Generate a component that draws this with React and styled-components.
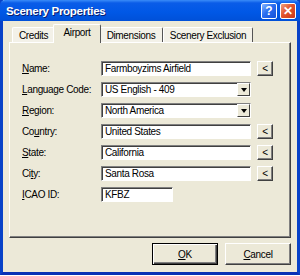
import React from "react";
import styled, { createGlobalStyle } from "styled-components";

const Global = createGlobalStyle`
  html, body {
    margin: 0;
    padding: 0;
    background: #ffffff;
  }
  * { box-sizing: border-box; }
`;

const font = `"Liberation Sans", Arial, sans-serif`;

const Window = styled.div`
  width: 300px;
  height: 275px;
  background: #ece9d8;
  border-left: 3px solid #0842c8;
  border-right: 3px solid #0842c8;
  border-bottom: 3px solid #0831b5;
  display: flex;
  flex-direction: column;
  font-family: ${font};
  font-size: 10px;
  letter-spacing: -0.35px;
  color: #000;
`;

const TitleBar = styled.div`
  height: 21px;
  margin: 0 -3px;
  padding: 0 4px 0 6px;
  border-radius: 5px 5px 0 0;
  display: flex;
  align-items: center;
  justify-content: space-between;
  background: linear-gradient(#3a8cf8 0, #0a5ce8 3px, #0058e6 12px, #0050d8 21px);
`;

const Title = styled.span`
  color: #fff;
  font-weight: bold;
  font-size: 11.5px;
  letter-spacing: -0.3px;
  text-shadow: 1px 1px 0 #0a1e6e;
`;

const Controls = styled.div`
  display: flex;
  gap: 3px;
`;

const CapButton = styled.div`
  width: 16px;
  height: 16px;
  border: 1px solid #fff;
  border-radius: 2px;
  display: flex;
  align-items: center;
  justify-content: center;
  color: #fff;
  font-family: "Liberation Sans", sans-serif;
  font-weight: bold;
  font-size: 12px;
  letter-spacing: 0;
  background: ${(p) =>
    p.$close
      ? "linear-gradient(135deg, #f0a080 0%, #e2542c 45%, #c8381a 100%)"
      : "linear-gradient(135deg, #8ab8ff 0%, #2a6ef0 45%, #1450d8 100%)"};
`;

const Body = styled.div`
  flex: 1;
  padding: 3px 6px 0 6px;
  display: flex;
  flex-direction: column;
`;

const TabStrip = styled.div`
  height: 18px;
  padding-left: 3px;
  display: flex;
  align-items: flex-end;
  position: relative;
  z-index: 1;
`;

const Tab = styled.div`
  width: ${(p) => p.$w}px;
  height: ${(p) => (p.$active ? 19 : 15)}px;
  margin: ${(p) => (p.$active ? "0 -2px -1px -2px" : "0")};
  background: ${(p) => (p.$active ? "#ece9d8" : "#f3f1e8")};
  border-top: 1px solid #fff;
  border-left: 1px solid #fff;
  border-right: 1px solid #555;
  border-radius: 2px 2px 0 0;
  display: flex;
  align-items: ${(p) => (p.$active ? "flex-start" : "center")};
  padding-top: ${(p) => (p.$active ? "2px" : "0")};
  justify-content: center;
  white-space: nowrap;
  position: relative;
  z-index: ${(p) => (p.$active ? 2 : 1)};
`;

const Panel = styled.div`
  height: 196px;
  border-top: 1px solid #fff;
  border-left: 1px solid #fff;
  border-right: 1px solid #404040;
  border-bottom: 1px solid #404040;
  box-shadow: inset -1px -1px 0 #808080;
  padding: 18px 0 0 12px;
`;

const Form = styled.div`
  display: grid;
  grid-template-columns: 73px 150px 16px;
  grid-auto-rows: 15px;
  column-gap: 6px;
  row-gap: 6px;
`;

const Label = styled.label`
  display: flex;
  align-items: center;
  white-space: nowrap;
`;

const Field = styled.div`
  grid-column: 2;
  width: ${(p) => p.$w || 150}px;
  height: 15px;
  background: #fff;
  border-top: 1px solid #808080;
  border-left: 1px solid #808080;
  border-right: 1px solid #fff;
  border-bottom: 1px solid #fff;
  box-shadow: inset 1px 1px 0 #404040;
  display: flex;
  align-items: center;
  padding-left: 3px;
  white-space: nowrap;
  overflow: hidden;
`;

const FieldText = styled.span`
  flex: 1;
`;

const DropArrow = styled.div`
  width: 13px;
  height: 13px;
  background: #ece9d8;
  border-top: 1px solid #fff;
  border-left: 1px solid #fff;
  border-right: 1px solid #404040;
  border-bottom: 1px solid #404040;
  display: flex;
  align-items: center;
  justify-content: center;
  &::after {
    content: "";
    border-left: 3px solid transparent;
    border-right: 3px solid transparent;
    border-top: 4px solid #000;
  }
`;

const SmallButton = styled.div`
  grid-column: 3;
  width: 16px;
  height: 15px;
  background: #ece9d8;
  border-top: 1px solid #fff;
  border-left: 1px solid #fff;
  border-right: 1px solid #404040;
  border-bottom: 1px solid #404040;
  box-shadow: inset -1px -1px 0 #808080;
  display: flex;
  align-items: center;
  justify-content: center;
  font-size: 10px;
  line-height: 1;
`;

const ButtonRow = styled.div`
  margin-top: 5px;
  display: flex;
  justify-content: flex-end;
  gap: 7px;
`;

const DialogButton = styled.div`
  width: 66px;
  height: 22px;
  background: #ece9d8;
  border-top: 1px solid ${(p) => (p.$default ? "#000" : "#fff")};
  border-left: 1px solid ${(p) => (p.$default ? "#000" : "#fff")};
  border-right: 1px solid ${(p) => (p.$default ? "#000" : "#404040")};
  border-bottom: 1px solid ${(p) => (p.$default ? "#000" : "#404040")};
  box-shadow: ${(p) =>
    p.$default
      ? "inset 1px 1px 0 #fff, inset -1px -1px 0 #404040, inset -2px -2px 0 #808080"
      : "inset -1px -1px 0 #808080"};
  display: flex;
  align-items: center;
  justify-content: center;
`;

const rows = [
  { label: "Name:", key: "N", value: "Farmboyzims Airfield", pick: true },
  { label: "Language Code:", key: "L", value: "US English - 409", drop: true },
  { label: "Region:", key: "R", value: "North America", drop: true },
  { label: "Country:", key: "u", value: "United States", pick: true },
  { label: "State:", key: "S", value: "California", pick: true },
  { label: "City:", key: "t", value: "Santa Rosa", pick: true },
  { label: "ICAO ID:", key: "I", value: "KFBZ", w: 72 },
];

const Accel = ({ text, ch }) => {
  const i = text.indexOf(ch);
  if (i < 0) return text;
  return (
    <>
      {text.slice(0, i)}
      <u>{text[i]}</u>
      {text.slice(i + 1)}
    </>
  );
};

export default function App() {
  return (
    <>
      <Global />
      <Window>
        <TitleBar>
          <Title>Scenery Properties</Title>
          <Controls>
            <CapButton>?</CapButton>
            <CapButton $close>✕</CapButton>
          </Controls>
        </TitleBar>
        <Body>
          <TabStrip>
            <Tab $w={43}>Credits</Tab>
            <Tab $w={48} $active>Airport</Tab>
            <Tab $w={64}>Dimensions</Tab>
            <Tab $w={90}>Scenery Exclusion</Tab>
          </TabStrip>
          <Panel>
            <Form>
              {rows.map((r) => (
                <React.Fragment key={r.label}>
                  <Label>
                    <Accel text={r.label} ch={r.key} />
                  </Label>
                  <Field $w={r.w}>
                    <FieldText>{r.value}</FieldText>
                    {r.drop && <DropArrow />}
                  </Field>
                  {r.pick ? <SmallButton>&lt;</SmallButton> : <span />}
                </React.Fragment>
              ))}
            </Form>
          </Panel>
          <ButtonRow>
            <DialogButton $default>
              <Accel text="OK" ch="O" />
            </DialogButton>
            <DialogButton>
              <Accel text="Cancel" ch="C" />
            </DialogButton>
          </ButtonRow>
        </Body>
      </Window>
    </>
  );
}
